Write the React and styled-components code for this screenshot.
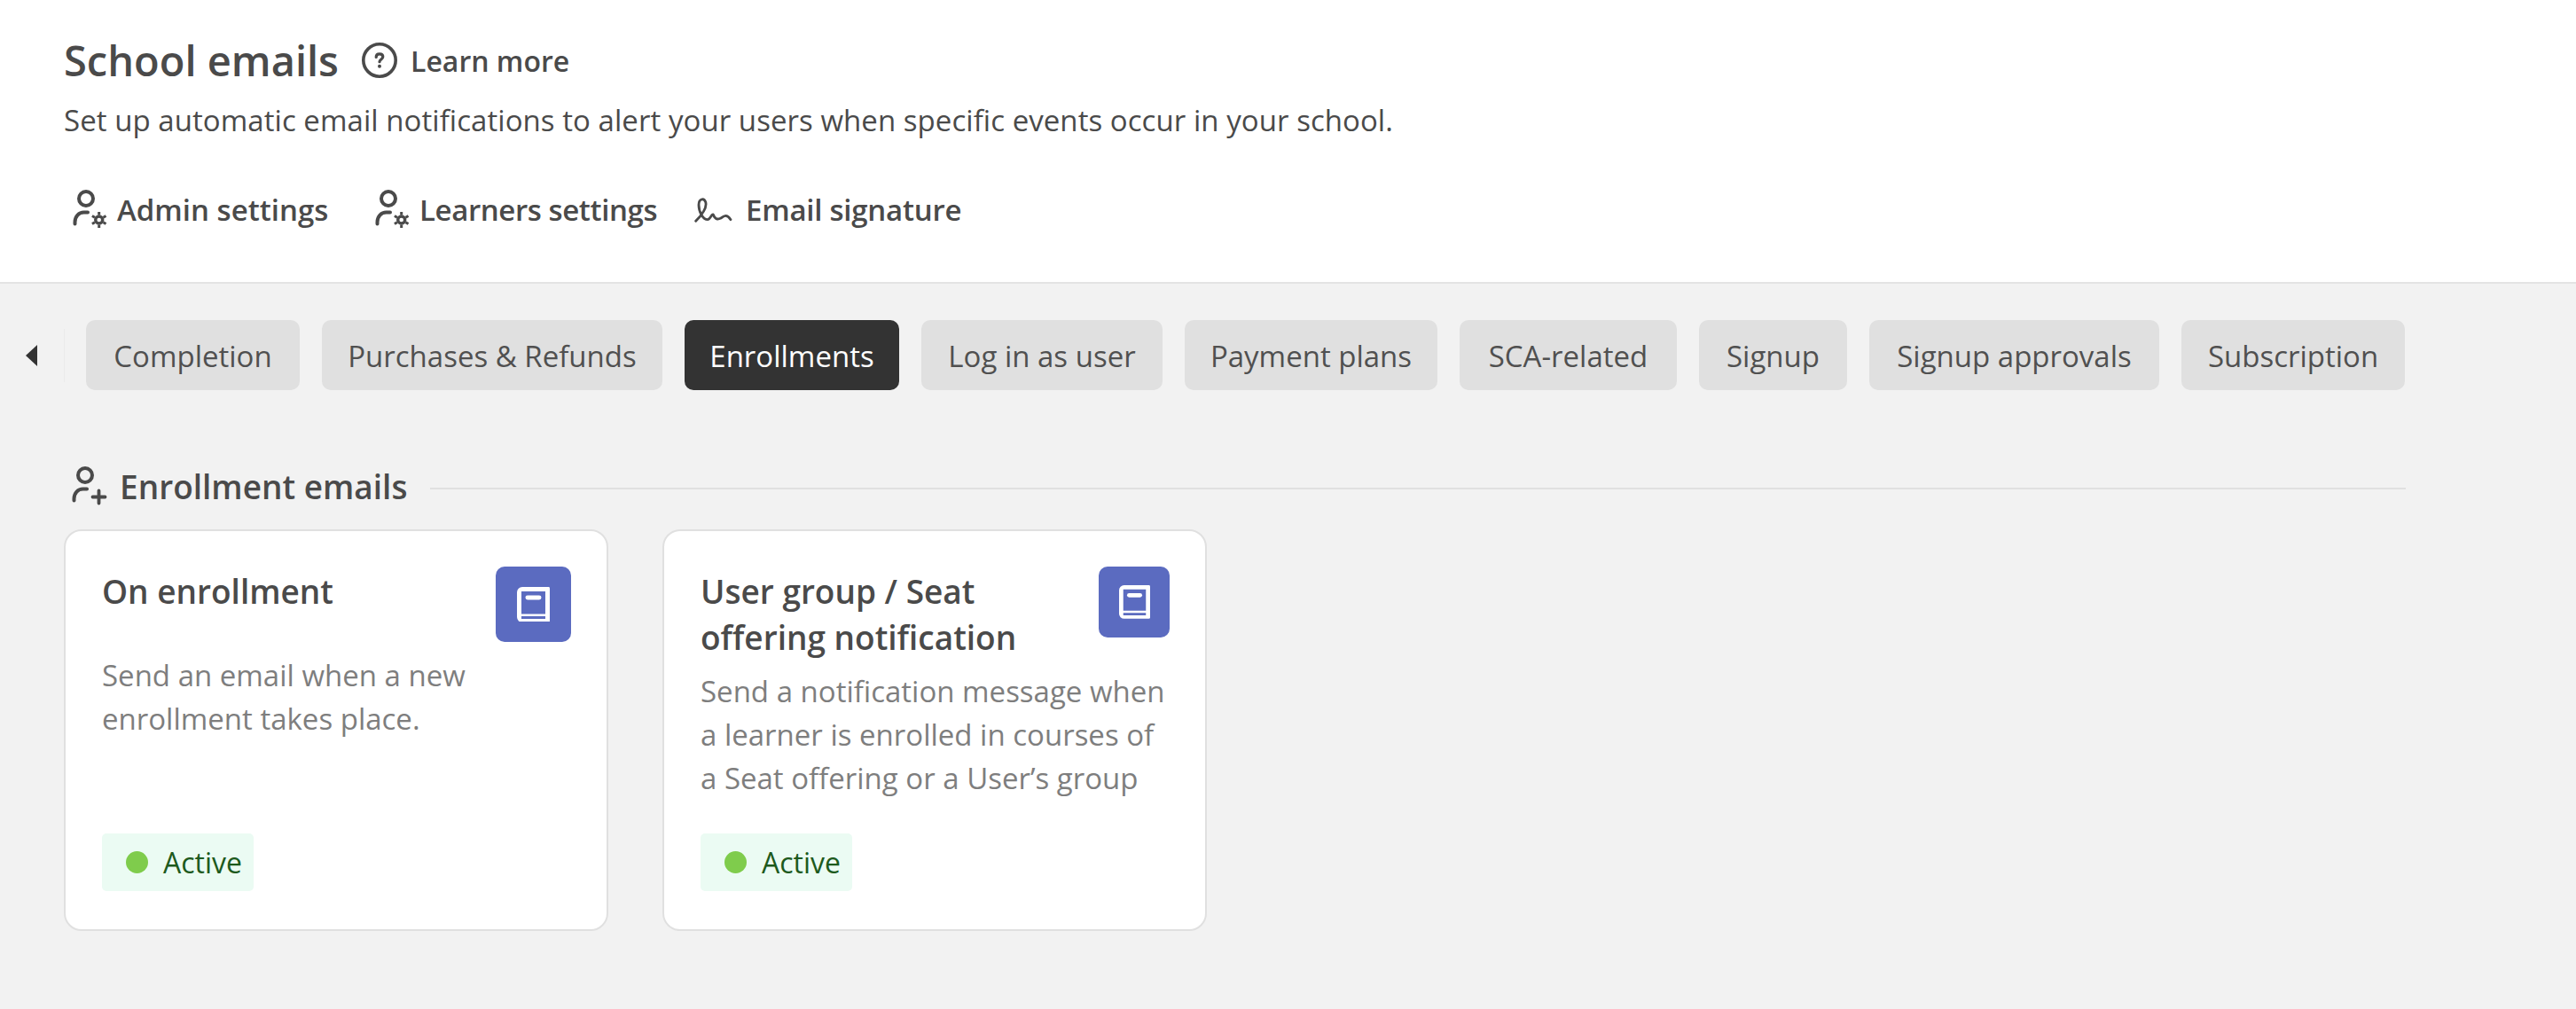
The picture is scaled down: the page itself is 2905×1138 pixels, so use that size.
import React from "react";
import styled, { createGlobalStyle } from "styled-components";

const GlobalStyle = createGlobalStyle`
  html, body {
    margin: 0;
    padding: 0;
    background: #f2f2f2;
    font-family: "Open Sans", "Noto Sans", sans-serif;
    color: #4a4a4a;
  }
`;

const Page = styled.div`
  width: 2905px;
  height: 1138px;
  overflow: hidden;
`;

const Header = styled.header`
  box-sizing: border-box;
  height: 320px;
  padding: 40px 0 0 72px;
  background: #fff;
  border-bottom: 2px solid #e4e4e4;
`;

const TitleRow = styled.div`
  display: flex;
  align-items: center;
  height: 56px;
`;

const Title = styled.h1`
  margin: 0;
  font-size: 47px;
  font-weight: 600;
  line-height: 56px;
`;

const LearnMore = styled.a`
  display: flex;
  align-items: center;
  gap: 14px;
  margin-left: 25px;
  font-size: 32px;
  font-weight: 600;
`;

const Lead = styled.p`
  margin: 18px 0 0;
  font-size: 33px;
  line-height: 44px;
  letter-spacing: 0.05px;
`;

const Actions = styled.nav`
  display: flex;
  margin: 55px 0 0 8px;
`;

const Action = styled.a`
  display: flex;
  align-items: center;
  width: ${(p) => p.$w}px;
  height: 46px;
  font-size: 33px;
  font-weight: 600;
  letter-spacing: ${(p) => p.$track || 0}px;
  gap: ${(p) => p.$gap || 8}px;
`;

const TabBar = styled.div`
  display: flex;
  align-items: center;
  height: 79px;
  margin-top: 41px;
  padding-left: 29px;
`;

const PrevArrow = styled.span`
  width: 0;
  height: 0;
  border-style: solid;
  border-width: 12.5px 13px 12.5px 0;
  border-color: transparent #333 transparent transparent;
`;

const Divider = styled.span`
  width: 1px;
  height: 60px;
  margin: 0 24px 0 30px;
  background: #ebebeb;
`;

const Tabs = styled.div`
  display: flex;
  gap: 25px;
`;

const Tab = styled.button`
  box-sizing: border-box;
  width: ${(p) => p.$w}px;
  height: 79px;
  padding: 2px 0 0;
  border: 0;
  border-radius: 10px;
  font-family: inherit;
  font-size: 33px;
  background: ${(p) => (p.$active ? "#333333" : "#e0e0e0")};
  color: ${(p) => (p.$active ? "#fff" : "#505050")};
`;

const Section = styled.section`
  width: 2641px;
  margin: 83px 0 0 72px;
`;

const SectionHead = styled.div`
  display: flex;
  align-items: center;
  height: 50px;
  padding-left: 7px;
`;

const SectionTitle = styled.h2`
  margin: 0 0 0 12px;
  font-size: 37px;
  font-weight: 600;
  white-space: nowrap;
`;

const SectionLine = styled.span`
  flex: 1;
  height: 2px;
  margin: 6px 0 0 26px;
  background: #e0e0e0;
`;

const Cards = styled.div`
  display: flex;
  gap: 61px;
  margin-top: 24px;
`;

const Card = styled.article`
  box-sizing: border-box;
  display: flex;
  flex-direction: column;
  width: 614px;
  height: 453px;
  padding: 40px 40px 43px 41px;
  background: #fff;
  border: 2px solid #e0e0e0;
  border-radius: 20px;
`;

const CardTop = styled.div`
  display: flex;
  justify-content: space-between;
  align-items: flex-start;
  min-height: ${(p) => p.$minH}px;
`;

const CardTitle = styled.h3`
  margin: 2px 0 0;
  font-size: 37px;
  font-weight: 600;
  line-height: 52px;
`;

const IconTile = styled.div`
  display: flex;
  flex: none;
  align-items: center;
  justify-content: center;
  width: ${(p) => p.$size}px;
  height: ${(p) => p.$size}px;
  border-radius: 10px;
  background: #5b6bc0;
`;

const CardText = styled.p`
  margin: 0;
  flex: 1;
  font-size: 33px;
  line-height: 49px;
  color: #7e7e7e;
`;

const Status = styled.div`
  display: flex;
  align-items: center;
  gap: 17px;
  width: 171px;
  height: 65px;
  box-sizing: border-box;
  padding-left: 27px;
  border-radius: 5px;
  background: #ebfbf3;
  font-size: 32px;
  color: #1d5a1d;
`;

const StatusDot = styled.span`
  flex: none;
  width: 25px;
  height: 25px;
  border-radius: 50%;
  background: #7fcc4c;
`;

const HelpIcon = () => (
  <svg width="42" height="42" viewBox="0 0 42 42" fill="none" stroke="#4a4a4a" strokeLinecap="round">
    <circle cx="21" cy="21" r="18.2" strokeWidth="3.6" />
    <path d="M17.2 17.5c0-2.400 1.600-3.700 3.800-3.700s3.800 1.300 3.800 3.300c0 2.700-3.800 3-3.800 5.600" strokeWidth="3.2" />
    <circle cx="21" cy="27.8" r="1.1" strokeWidth="1.8" fill="#4a4a4a" />
  </svg>
);

const Person = () => (
  <>
    <circle cx="17" cy="11" r="8" />
    <path d="M4.500 39.500v-2c0-6.500 4.500-11 10-11h4.500" />
  </>
);

const UserGearIcon = () => (
  <svg width="44" height="46" viewBox="0 0 44 46" fill="none" stroke="#4a4a4a" strokeWidth="4" strokeLinecap="round">
    <Person />
    <g strokeWidth="3" strokeLinecap="butt">
      <circle cx="31.700" cy="35" r="4" strokeWidth="3.400" />
      <path d="M31.700 26v3.500M31.700 40.500v3.500M23.900 30.500l3 1.750M36.500 37.750l3 1.750M23.900 39.500l3-1.750M36.500 32.250l3-1.750" />
    </g>
  </svg>
);

const UserPlusIcon = () => (
  <svg width="44" height="46" viewBox="0 0 44 46" fill="none" stroke="#4a4a4a" strokeWidth="4" strokeLinecap="round">
    <Person />
    <path d="M25.500 35.500h14M32.500 28.500v14" strokeWidth="3.800" />
  </svg>
);

const SignatureIcon = () => (
  <svg width="44" height="30" viewBox="40 50 132 90" fill="none" stroke="#4a4a4a" strokeWidth="8.5" strokeLinecap="round" strokeLinejoin="round">
    <path d="M45 135C60 120 85 92 78 70 72 55 55 60 55 80 55 105 70 130 85 130 95 130 100 105 105 115 110 130 120 130 130 125 140 118 150 110 163 130" />
  </svg>
);

// the tile is a bit narrower on the second card, the book follows it
const BookIcon = ({ w }) => (
  <svg width={w} height={w * 1.08} viewBox="0 0 37 40">
    <path
      fill="#fff"
      fillRule="evenodd"
      d="M6 0h29.500a1.500 1.500 0 0 1 1.500 1.500v37a1.500 1.500 0 0 1-1.500 1.500H6a6 6 0 0 1-6-6V6a6 6 0 0 1 6-6zM5 5v25.500h27V5zM5 33v3h27v-3z"
    />
    <rect x="9.500" y="9.500" width="18" height="5" rx="2.500" fill="#fff" />
  </svg>
);

const tabs = [
  ["Completion", 241],
  ["Purchases & Refunds", 384],
  ["Enrollments", 242, true],
  ["Log in as user", 272],
  ["Payment plans", 285],
  ["SCA-related", 245],
  ["Signup", 167],
  ["Signup approvals", 327],
  ["Subscription", 252],
];

const cards = [
  {
    title: "On enrollment",
    text: "Send an email when a new enrollment takes place.",
    tile: 85,
    book: 37,
    minH: 98,
  },
  {
    title: (
      <>
        User group / Seat
        <br />
        offering notification
      </>
    ),
    text: (
      <>
        Send a notification message when
        <br />a learner is enrolled in courses of
        <br />a Seat offering or a User’s group
      </>
    ),
    tile: 80,
    book: 35,
    minH: 116,
  },
];

export default function App() {
  return (
    <Page>
      <GlobalStyle />
      <Header>
        <TitleRow>
          <Title>School emails</Title>
          <LearnMore>
            <HelpIcon />
            Learn more
          </LearnMore>
        </TitleRow>
        <Lead>Set up automatic email notifications to alert your users when specific events occur in your school.</Lead>
        <Actions>
          <Action $w={341}>
            <UserGearIcon />
            Admin settings
          </Action>
          <Action $w={362} $track={-0.4}>
            <UserGearIcon />
            Learners settings
          </Action>
          <Action $w={320} $gap={14} $track={-0.25}>
            <SignatureIcon />
            Email signature
          </Action>
        </Actions>
      </Header>

      <TabBar>
        <PrevArrow />
        <Divider />
        <Tabs>
          {tabs.map(([label, w, active]) => (
            <Tab key={label} $w={w} $active={active}>
              {label}
            </Tab>
          ))}
        </Tabs>
      </TabBar>

      <Section>
        <SectionHead>
          <UserPlusIcon />
          <SectionTitle>Enrollment emails</SectionTitle>
          <SectionLine />
        </SectionHead>
        <Cards>
          {cards.map((c, i) => (
            <Card key={i}>
              <CardTop $minH={c.minH}>
                <CardTitle>{c.title}</CardTitle>
                <IconTile $size={c.tile}>
                  <BookIcon w={c.book} />
                </IconTile>
              </CardTop>
              <CardText>{c.text}</CardText>
              <Status>
                <StatusDot />
                Active
              </Status>
            </Card>
          ))}
        </Cards>
      </Section>
    </Page>
  );
}
